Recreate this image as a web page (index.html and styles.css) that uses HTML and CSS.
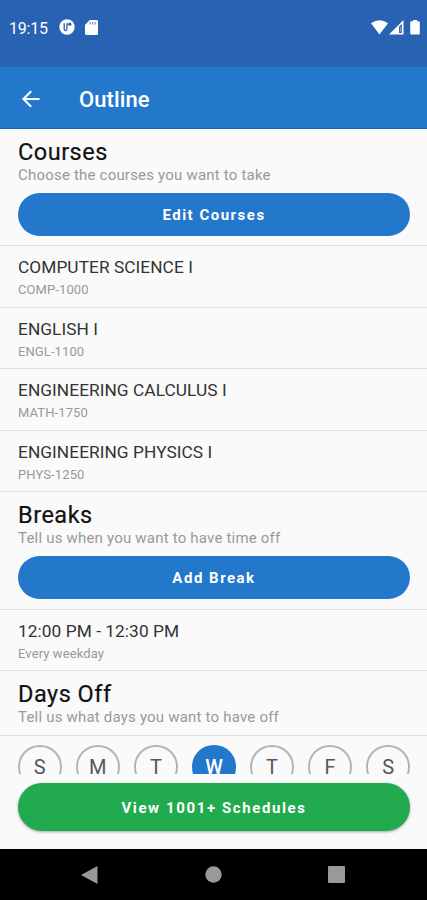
FILE: index.html
```html
<!DOCTYPE html>
<html lang="en">
<head>
  <meta charset="UTF-8">
  <meta name="viewport" content="width=device-width, initial-scale=1">
  <title>Outline</title>
  <link rel="stylesheet" href="styles.css">
</head>
<body>
  <!-- Status bar -->
  <div class="status-bar">
    <span class="clock">19:15</span>
    <svg class="icon-app" width="16" height="16" viewBox="0 0 16 16">
      <circle cx="8" cy="8" r="7.7" fill="#fff"/>
      <path d="M5.2 4.2v5.4q0 2 1.6 2 1.2 0 1.2-2V4.8h1" fill="none" stroke="#2862b3" stroke-width="1.3"/>
      <circle cx="10.8" cy="5.2" r="1.6" fill="#2862b3"/>
    </svg>
    <svg class="icon-card" width="13" height="15" viewBox="0 0 13 15">
      <path d="M4.8 0H11.5Q13 0 13 1.5V13.5Q13 15 11.5 15H1.5Q0 15 0 13.5V5z" fill="#fff"/>
      <path d="M5.2 2v2.5M7.7 2v2.5M10.2 2v2.5" stroke="#8aa9d6" stroke-width="1.5"/>
    </svg>
    <div class="status-right">
      <svg width="17" height="15" viewBox="0 0 17 15">
        <path d="M0 3.3Q8.5-3 17 3.3L8.5 14.5z" fill="#fff"/>
      </svg>
      <svg width="15" height="15" viewBox="0 0 15 15">
        <path d="M0 14.5L14.5 0V14.5z" fill="#fff"/>
        <path d="M10 6.5L12.8 4v9H10z" fill="#2862b3"/>
        <path d="M11.4 7v4.8" stroke="#a9bfe0" stroke-width="0.8"/>
      </svg>
      <svg class="icon-battery" width="10" height="15" viewBox="0 0 10 15">
        <path d="M3 0h4v1.3h1.8q1 0 1 1v11.2q0 1-1 1H1.2q-1 0-1-1V2.3q0-1 1-1H3z" fill="#fff"/>
      </svg>
    </div>
  </div>

  <!-- App bar -->
  <div class="app-bar">
    <svg width="18" height="18" viewBox="0 0 18 18">
      <path d="M17.6 9H1.6M9.2 1.2L1.4 9l7.8 7.8" fill="none" stroke="#fff" stroke-width="2"/>
    </svg>
    <h1>Outline</h1>
  </div>

  <!-- Scrolling content -->
  <div class="content">
    <div class="section">
      <h2>Courses</h2>
      <p>Choose the courses you want to take</p>
      <button class="btn">Edit Courses</button>
    </div>
    <div class="item">
      <div class="item-title">COMPUTER SCIENCE I</div>
      <div class="item-sub">COMP-1000</div>
    </div>
    <div class="item">
      <div class="item-title">ENGLISH I</div>
      <div class="item-sub">ENGL-1100</div>
    </div>
    <div class="item">
      <div class="item-title">ENGINEERING CALCULUS I</div>
      <div class="item-sub">MATH-1750</div>
    </div>
    <div class="item">
      <div class="item-title">ENGINEERING PHYSICS I</div>
      <div class="item-sub">PHYS-1250</div>
    </div>

    <div class="section">
      <h2>Breaks</h2>
      <p>Tell us when you want to have time off</p>
      <button class="btn">Add Break</button>
    </div>
    <div class="item">
      <div class="item-title">12:00 PM - 12:30 PM</div>
      <div class="item-sub">Every weekday</div>
    </div>

    <div class="section section-days">
      <h2>Days Off</h2>
      <p>Tell us what days you want to have off</p>
    </div>
    <div class="days">
      <div class="day">S</div>
      <div class="day">M</div>
      <div class="day">T</div>
      <div class="day selected">W</div>
      <div class="day">T</div>
      <div class="day">F</div>
      <div class="day">S</div>
    </div>
  </div>

  <div class="footer">
    <button class="btn btn-green">View 1001+ Schedules</button>
  </div>

  <!-- Android navigation -->
  <div class="nav-bar">
    <svg width="17" height="18" viewBox="0 0 17 18"><path d="M16.5 0v18L0 9z" fill="#999"/></svg>
    <svg width="17" height="17" viewBox="0 0 17 17"><circle cx="8.5" cy="8.5" r="8.2" fill="#999"/></svg>
    <svg width="17" height="17" viewBox="0 0 17 17"><rect width="17" height="17" rx="1" fill="#999"/></svg>
  </div>
</body>
</html>
```

FILE: styles.css
```css
* {
  box-sizing: border-box;
}

body {
  font-family: Roboto, sans-serif;
  margin: 0;
  height: 900px;
  display: flex;
  flex-direction: column;
  overflow: hidden;
  background-color: #fafafa;
}

h1,
h2,
p {
  margin: 0;
  font-weight: normal;
}

svg {
  display: block;
  flex: none;
}

.status-bar {
  flex: none;
  height: 67px;
  padding: 0 7px 13px 9px;
  display: flex;
  align-items: center;
  background-color: #2862b3;
  color: #fff;
}

.clock {
  font-size: 16px;
  padding-top: 2px;
  letter-spacing: -0.2px;
  width: 50px;
}

.icon-card {
  margin-left: 10px;
}

.status-right {
  display: flex;
  align-items: center;
  margin-left: auto;
  gap: 1px;
}

.icon-battery {
  margin-left: 5px;
}

.app-bar {
  flex: none;
  height: 62px;
  padding: 2px 22px 0;
  display: flex;
  align-items: center;
  background-color: #2478cc;
  border-bottom: 1px solid #1769b8;
  color: #fff;
}

.app-bar h1 {
  margin: 2px 0 0 39px;
  font-size: 22px;
  font-weight: 500;
  letter-spacing: 0.1px;
}

.content {
  flex: none;
  height: 645px;
  overflow: hidden;
}

.section {
  height: 117.3px;
  padding: 9px 17px 0 18px;
  border-bottom: 1px solid #dedede;
}

.section h2 {
  font-size: 23.5px;
  line-height: 29px;
  letter-spacing: 0.5px;
  color: #111;
  -webkit-text-stroke: 0.2px #111;
}

.section p {
  font-size: 15px;
  line-height: 17px;
  letter-spacing: 0.2px;
  color: #999;
}

.btn {
  display: block;
  width: 100%;
  height: 43px;
  margin-top: 9px;
  padding: 1px 0 0;
  border: none;
  border-radius: 22px;
  background-color: #2478cc;
  color: #fff;
  font-family: inherit;
  font-size: 15px;
  font-weight: 700;
  letter-spacing: 1.5px;
}

.item {
  height: 61.5px;
  padding: 11px 18px 0;
  border-bottom: 1px solid #dedede;
}

.item-title {
  font-size: 17.3px;
  line-height: 21px;
  letter-spacing: 0.06px;
  color: #333;
}

.item-sub {
  margin-top: 3px;
  font-size: 13px;
  line-height: 18px;
  letter-spacing: 0.1px;
  color: #999;
}

.section-days {
  height: 65px;
}

.days {
  display: flex;
  justify-content: space-between;
  padding: 9px 17px 0 18px;
}

.day {
  width: 43.5px;
  height: 43.5px;
  border: 2px solid #b5b5b5;
  border-radius: 50%;
  font-size: 20px;
  line-height: 41px;
  text-align: center;
  color: #555;
}

.day.selected {
  background-color: #2478cc;
  border-color: #2478cc;
  color: #fff;
  font-weight: 500;
}

.footer {
  flex: none;
  height: 75px;
  padding: 0 17px 0 18px;
}

.btn-green {
  height: 48px;
  border-radius: 24px;
  letter-spacing: 1.6px;
  background-color: #22aa4f;
  box-shadow: 0 1px 3px rgba(0, 0, 0, 0.35);
}

.nav-bar {
  flex: 1;
  padding: 0 82px 0 81px;
  display: flex;
  align-items: center;
  justify-content: space-between;
  background-color: #000;
}
```
